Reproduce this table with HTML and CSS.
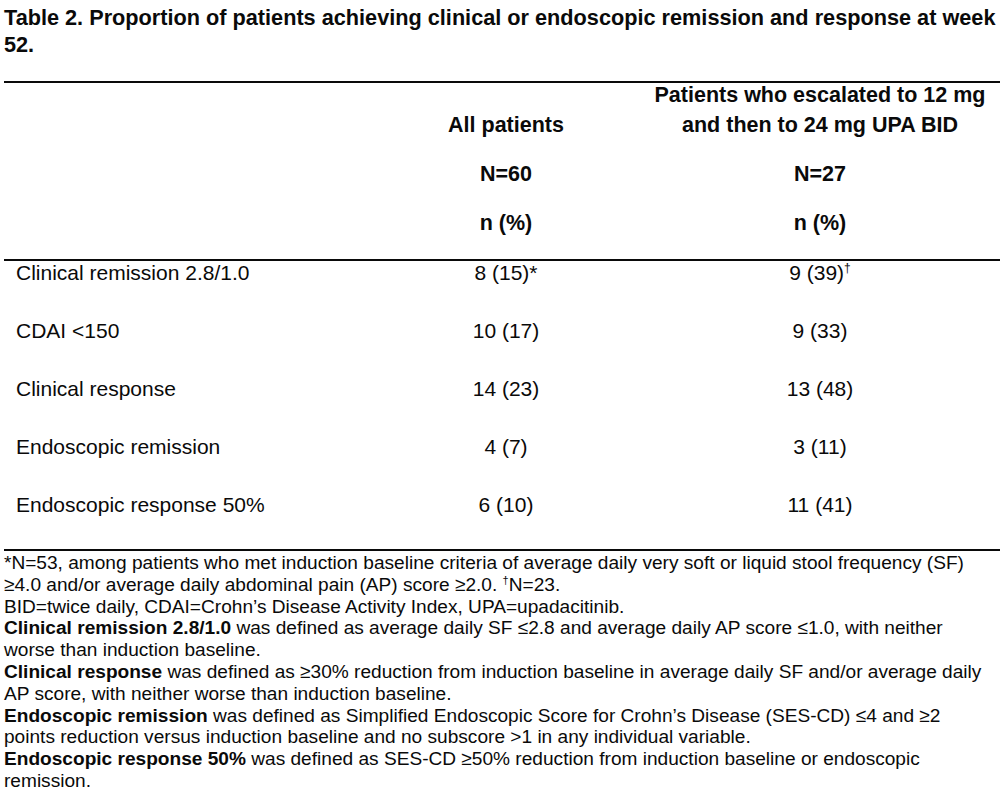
FILE: index.html
```html
<!DOCTYPE html>
<html>
<head>
<meta charset="utf-8">
<link rel="stylesheet" href="styles.css">
</head>
<body>
<div class="page">
  <h1 class="title">Table 2. Proportion of patients achieving clinical or endoscopic remission and response at week<br>52.</h1>
  <table class="data">
    <colgroup>
      <col class="c-label">
      <col class="c-all">
      <col class="c-esc">
    </colgroup>
    <thead>
      <tr class="h1row">
        <th class="label"></th>
        <th class="col">All patients</th>
        <th class="col"><span class="ln">Patients who escalated to 12 mg</span><span class="ln ln2">and then to 24 mg UPA BID</span></th>
      </tr>
      <tr class="h2row">
        <th class="label"></th>
        <th class="col">N=60</th>
        <th class="col">N=27</th>
      </tr>
      <tr class="h3row">
        <th class="label"></th>
        <th class="col">n (%)</th>
        <th class="col">n (%)</th>
      </tr>
    </thead>
    <tbody>
      <tr><td class="label">Clinical remission 2.8/1.0</td><td class="col">8 (15)*</td><td class="col">9 (39)<sup>†</sup></td></tr>
      <tr><td class="label">CDAI &lt;150</td><td class="col">10 (17)</td><td class="col">9 (33)</td></tr>
      <tr><td class="label">Clinical response</td><td class="col">14 (23)</td><td class="col">13 (48)</td></tr>
      <tr><td class="label">Endoscopic remission</td><td class="col">4 (7)</td><td class="col">3 (11)</td></tr>
      <tr class="last"><td class="label">Endoscopic response 50%</td><td class="col">6 (10)</td><td class="col">11 (41)</td></tr>
    </tbody>
  </table>
  <div class="notes">
    <p>*N=53, among patients who met induction baseline criteria of average daily very soft or liquid stool frequency (SF)<br>≥4.0 and/or average daily abdominal pain (AP) score ≥2.0. <sup>†</sup>N=23.</p>
    <p>BID=twice daily, CDAI=Crohn’s Disease Activity Index, UPA=upadacitinib.</p>
    <p><b>Clinical remission 2.8/1.0</b> was defined as average daily SF ≤2.8 and average daily AP score ≤1.0, with neither<br>worse than induction baseline.</p>
    <p><b>Clinical response</b> was defined as ≥30% reduction from induction baseline in average daily SF and/or average daily<br>AP score, with neither worse than induction baseline.</p>
    <p><b>Endoscopic remission</b> was defined as Simplified Endoscopic Score for Crohn’s Disease (SES-CD) ≤4 and ≥2<br>points reduction versus induction baseline and no subscore &gt;1 in any individual variable.</p>
    <p><b>Endoscopic response 50%</b> was defined as SES-CD ≥50% reduction from induction baseline or endoscopic<br>remission.</p>
  </div>
</div>
</body>
</html>
```
FILE: styles.css
```css
html, body {
  margin: 0;
  padding: 0;
  background: #fff;
}
body {
  font-family: "Liberation Sans", Arial, sans-serif;
  color: #0a0a0a;
}
.page {
  width: 996px;
  padding: 0 4px;
}
.title {
  margin: 0;
  padding-top: 4px;
  font-size: 21.7px;
  font-weight: bold;
  line-height: 27px;
  height: 77px;
  white-space: nowrap;
}
.data {
  width: 996px;
  table-layout: fixed;
  border-collapse: collapse;
  border-top: 2px solid #0a0a0a;
  border-bottom: 2px solid #0a0a0a;
}
.c-label { width: 368px; }
.c-all { width: 268px; }
.c-esc { width: 360px; }
.data th, .data td {
  padding: 0;
  text-align: center;
  white-space: nowrap;
}
.data .label {
  text-align: left;
  padding-left: 12px;
}
.data th {
  font-size: 21.5px;
  font-weight: bold;
  line-height: 24px;
  vertical-align: bottom;
}
.ln {
  display: block;
}
.ln2 {
  margin-top: 6px;
}
.h2row th { padding-top: 25px; }
.h3row th { padding-top: 25px; padding-bottom: 24px; border-bottom: 2px solid #0a0a0a; }
.data td {
  font-size: 21px;
  font-weight: normal;
  line-height: 24px;
  vertical-align: top;
  padding-bottom: 34px;
}
.data tr.last td {
  padding-bottom: 32px;
}
.data sup {
  font-size: 12px;
  line-height: 0;
  vertical-align: 8px;
}
.notes {
  font-size: 19.1px;
  line-height: 21.8px;
  padding-top: 1px;
  white-space: nowrap;
}
.notes p {
  margin: 0;
}
.notes sup {
  font-size: 11px;
  line-height: 0;
  vertical-align: 7px;
}
```
